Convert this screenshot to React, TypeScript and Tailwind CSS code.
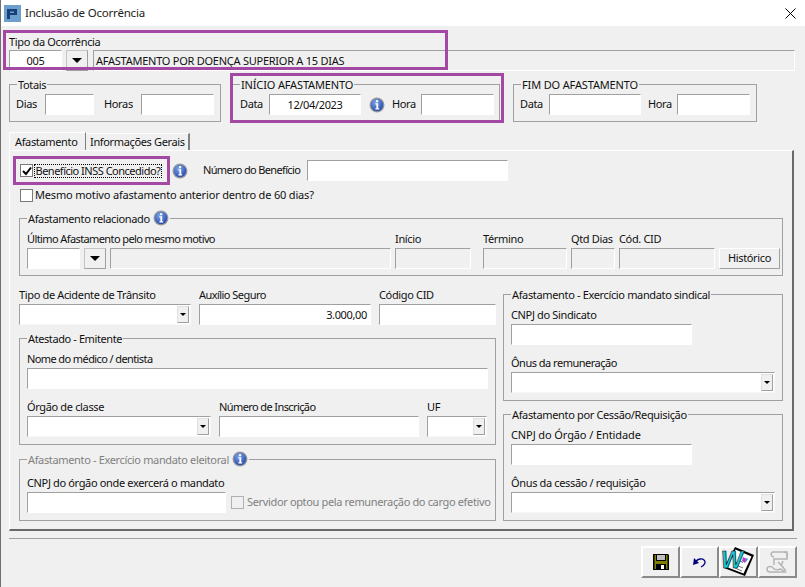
import type { ReactNode } from 'react';

// campo afundado estilo Win32
const Field = ({ className = '', value, disabled }: { className?: string; value?: string; disabled?: boolean }) => (
  <div
    className={`h-[21px] shrink-0 border border-t-[#a0a0a0] border-l-[#a0a0a0] border-r-white border-b-white flex items-center px-[2px] leading-none whitespace-nowrap ${disabled ? 'bg-[#f0f0f0]' : 'bg-white'} ${className}`}
  >
    {value}
  </div>
);

const DropButton = () => (
  <div className="w-[22px] h-[21px] shrink-0 border border-[#c4c4c4] border-r-[#a0a0a0] border-b-[#a0a0a0] bg-[#f0f0f0] flex items-center justify-center">
    <div className="w-0 h-0 border-x-[5px] border-x-transparent border-t-[5px] border-t-black" />
  </div>
);

const Select = ({ className = '' }: { className?: string }) => (
  <div className={`h-[21px] shrink-0 border border-t-[#a0a0a0] border-l-[#a0a0a0] border-r-[#f7f7f7] border-b-[#f7f7f7] bg-white flex justify-end p-[1px] ${className}`}>
    <div className="w-[12px] h-full border border-[#e0e0e0] border-r-[#a0a0a0] border-b-[#a0a0a0] bg-[#f0f0f0] flex items-center justify-center">
      <div className="w-0 h-0 border-x-[3px] border-x-transparent border-t-[3px] border-t-black" />
    </div>
  </div>
);

const InfoIcon = ({ id }: { id: string }) => (
  <svg width="16" height="16" viewBox="0 0 16 16" className="shrink-0">
    <defs>
      <radialGradient id={id} cx="0.4" cy="0.3" r="0.8">
        <stop offset="0" stopColor="#7fa6e8" />
        <stop offset="1" stopColor="#1b3fa8" />
      </radialGradient>
    </defs>
    <circle cx="8" cy="8" r="7.5" fill="#9a9a9a" />
    <circle cx="8" cy="8" r="6.2" fill={`url(#${id})`} />
    <rect x="7" y="3.2" width="2.2" height="2" fill="#fff" />
    <path d="M6.4 6.3h2.8v5h1v1.2H6.4v-1.2h1v-3.8h-1z" fill="#fff" />
  </svg>
);

const Group = ({ legend, className = '', children, gray }: { legend: ReactNode; className?: string; children: ReactNode; gray?: boolean }) => (
  <fieldset className={`border border-[#a0a0a0] shrink-0 min-w-0 px-[7px] pb-[6px] ${className}`}>
    <legend className={`px-[1px] h-[14px] flex items-center gap-[3px] leading-none whitespace-nowrap ${gray ? 'text-[#808080]' : ''}`}>{legend}</legend>
    {children}
  </fieldset>
);

const Label = ({ children, className = '' }: { children: ReactNode; className?: string }) => (
  <div className={`h-[14px] mb-[2px] leading-[14px] whitespace-nowrap ${className}`}>{children}</div>
);

const Check = ({ checked, disabled }: { checked?: boolean; disabled?: boolean }) => (
  <div className={`w-[13px] h-[13px] shrink-0 border flex items-center justify-center ${disabled ? 'border-[#b0b0b0] bg-[#f0f0f0]' : 'border-[#7a7a7a] bg-white'}`}>
    {checked && (
      <svg width="10" height="10" viewBox="0 0 10 10">
        <path d="M1 5l3 3 5-6.5" fill="none" stroke="#000" strokeWidth="2" />
      </svg>
    )}
  </div>
);

const ToolButton = ({ children }: { children: ReactNode }) => (
  <div className="w-[39px] h-[32px] border-2 border-t-white border-l-white border-r-[#8a8a8a] border-b-[#8a8a8a] bg-[#f0f0f0] flex items-center justify-center">
    {children}
  </div>
);

const TimeRow = ({ data, className = '' }: { data?: string; className?: string }) => (
  <div className={`flex items-center mt-[3px] whitespace-nowrap ${className}`}>
    <span className="w-[29px] shrink-0">Data</span>
    <Field className="w-[92px] justify-center" value={data} />
    {data ? (
      <div className="w-[60px] shrink-0 pl-[8px] flex items-center gap-[7px]">
        <InfoIcon id="info-inicio" />
        <span>Hora</span>
      </div>
    ) : (
      <span className="w-[36px] shrink-0 pl-[7px]">Hora</span>
    )}
    <Field className="w-[73px]" />
  </div>
);

export default function App() {
  return (
    <div className="relative w-[805px] h-[587px] overflow-hidden bg-[#f0f0f0] border-l border-[#707070] font-['Noto_Sans',sans-serif] text-[11px] tracking-[-0.35px] text-[#101010]">
      {/* barra de título */}
      <div className="h-[26px] bg-white flex items-center pl-[3px] pr-[9px]">
        <svg width="17" height="17" viewBox="0 0 17 17" className="shrink-0">
          <rect width="17" height="17" fill="#6d9fcc" />
          <path d="M3 4h10v6H6v4H3V4zm3 2.500V8h4V6.500z" fill="#173f78" fillRule="evenodd" />
        </svg>
        <span className="ml-[4px] text-[11.5px] tracking-[-0.2px] text-[#222]">Inclusão de Ocorrência</span>
        <svg width="11" height="11" viewBox="0 0 11 11" className="ml-auto">
          <path d="M.5.500l10 10M10.500.500l-10 10" stroke="#000" strokeWidth="1" />
        </svg>
      </div>

      <div className="pl-[8px] pr-[10px]">
        {/* tipo da ocorrência */}
        <div className="pt-[9px]">
          <div className="h-[14px] mb-[1px] leading-[14px]">Tipo da Ocorrência</div>
          <div className="flex items-start">
            <Field className="w-[53px] justify-center" value="005" />
            <div className="ml-[4px]"><DropButton /></div>
            <Field className="w-[702px] ml-[5px] tracking-[-0.25px]" disabled value="AFASTAMENTO POR DOENÇA SUPERIOR A 15 DIAS" />
          </div>
        </div>

        {/* totais / início / fim */}
        <div className="flex mt-[6px]">
          <Group className="w-[212px] h-[45px]" legend="Totais">
            <div className="flex items-center mt-[3px] -ml-[1px]">
              <span className="w-[29px] shrink-0">Dias</span>
              <Field className="w-[49px]" />
              <span className="w-[47px] shrink-0 pl-[10px]">Horas</span>
              <Field className="w-[73px]" />
            </div>
          </Group>
          <Group className="w-[268px] h-[45px] ml-[11px]" legend={<span className="tracking-[-0.15px]">INÍCIO AFASTAMENTO</span>}>
            <TimeRow data="12/04/2023" />
          </Group>
          <Group className="w-[244px] h-[45px] ml-[13px]" legend={<span className="tracking-[-0.15px]">FIM DO AFASTAMENTO</span>}>
            <TimeRow className="-ml-[1px]" />
          </Group>
        </div>

        {/* abas */}
        <div className="flex items-end mt-[10px] h-[18px]">
          <div className="w-[77px] h-[18px] px-[5px] leading-[17px] bg-[#f0f0f0] border-t border-l border-white border-r border-r-[#808080]">Afastamento</div>
          <div className="w-[104px] h-[17px] pl-[4px] leading-[16px] border-t border-white border-r-2 border-r-[#808080] whitespace-nowrap">Informações Gerais</div>
        </div>

        <div className="w-[785px] h-[381px] border border-t-white border-l-white border-r-2 border-r-[#696969] border-b-2 border-b-[#696969] pl-[9px] pt-[9px]">
          <div className="flex items-center h-[21px]">
            <div className="w-[153px] pl-[1px] flex items-center gap-[1px]">
              <Check checked />
              <span className="border border-dotted border-black leading-[12px] px-[0.5px] whitespace-nowrap tracking-[-0.5px]">Benefício INSS Concedido?</span>
            </div>
            <InfoIcon id="info-beneficio" />
            <span className="ml-[15px] w-[104px] whitespace-nowrap tracking-[-0.65px]">Número do Benefício</span>
            <Field className="w-[201px]" />
          </div>
          <div className="flex items-center gap-[2px] h-[13px] mt-[8px] pl-[1px]">
            <Check />
            <span className="tracking-[-0.17px]">Mesmo motivo afastamento anterior dentro de 60 dias?</span>
          </div>

          {/* afastamento relacionado */}
          <Group
            className="w-[764px] h-[65px] mt-[9px]"
            legend={<>Afastamento relacionado <InfoIcon id="info-relacionado" /></>}
          >
            <div className="flex gap-[4px] pt-[7px] -mr-[9px]">
              <div className="w-[364px] shrink-0">
                <Label className="tracking-[-0.6px]">Último Afastamento pelo mesmo motivo</Label>
                <div className="flex gap-[4px]">
                  <Field className="w-[53px]" />
                  <DropButton />
                  <Field className="w-[281px]" disabled />
                </div>
              </div>
              <div className="w-[76px] shrink-0">
                <Label>Início</Label>
                <Field className="w-full" disabled />
              </div>
              <div className="w-[84px] shrink-0 ml-[8px]">
                <Label>Término</Label>
                <Field className="w-full" disabled />
              </div>
              <div className="w-[44px] shrink-0">
                <Label>Qtd Dias</Label>
                <Field className="w-full" disabled />
              </div>
              <div className="w-[96px] shrink-0">
                <Label>Cód. CID</Label>
                <Field className="w-full" disabled />
              </div>
              <div className="pt-[16px] shrink-0">
                <div className="w-[61px] h-[21px] border border-t-white border-l-white border-r-[#a0a0a0] border-b-[#a0a0a0] bg-[#f0f0f0] flex items-center justify-center">
                  Histórico
                </div>
              </div>
            </div>
          </Group>

          <div className="flex gap-[7px] mt-[11px]">
            {/* coluna esquerda */}
            <div className="w-[477px]">
              <div className="flex gap-[8px] pt-[1px]">
                <div>
                  <Label>Tipo de Acidente de Trânsito</Label>
                  <Select className="w-[172px]" />
                </div>
                <div>
                  <Label className="tracking-[-0.55px]">Auxílio Seguro</Label>
                  <Field className="w-[172px] justify-end pr-[3px]" value="3.000,00" />
                </div>
                <div>
                  <Label>Código CID</Label>
                  <Field className="w-[117px]" />
                </div>
              </div>

              <Group className="w-[477px] h-[114px] mt-[6px]" legend={<span className="tracking-[-0.4px]">Atestado - Emitente</span>}>
                <div className="pt-[7px]">
                  <Label className="tracking-[-0.6px]">Nome do médico / dentista</Label>
                  <Field className="w-[461px]" />
                  <div className="flex gap-[8px] mt-[11px]">
                    <div>
                      <Label>Órgão de classe</Label>
                      <Select className="w-[184px]" />
                    </div>
                    <div>
                      <Label className="tracking-[-0.6px]">Número de Inscrição</Label>
                      <Field className="w-[200px]" />
                    </div>
                    <div>
                      <Label>UF</Label>
                      <Select className="w-[60px]" />
                    </div>
                  </div>
                </div>
              </Group>

              <Group
                gray
                className="w-[477px] h-[69px] mt-[7px]"
                legend={<>Afastamento - Exercício mandato eleitoral <InfoIcon id="info-eleitoral" /></>}
              >
                <div className="pt-[10px]">
                  <Label>CNPJ do órgão onde exercerá o mandato</Label>
                  <div className="flex items-center">
                    <Field className="w-[199px]" />
                    <div className="ml-[5px] flex items-center gap-[3px] text-[#808080] whitespace-nowrap">
                      <Check disabled />
                      <span>Servidor optou pela remuneração do cargo efetivo</span>
                    </div>
                  </div>
                </div>
              </Group>
            </div>

            {/* coluna direita */}
            <div className="w-[280px]">
              <Group className="w-[280px] h-[114px]" legend="Afastamento - Exercício mandato sindical">
                <div className="pt-[7px]">
                  <Label>CNPJ do Sindicato</Label>
                  <Field className="w-[181px]" />
                  <Label className="mt-[11px] tracking-[-0.5px]">Ônus da remuneração</Label>
                  <Select className="w-[264px]" />
                </div>
              </Group>
              <Group className="w-[280px] h-[114px] mt-[6px]" legend="Afastamento por Cessão/Requisição">
                <div className="pt-[7px]">
                  <Label className="tracking-[-0.1px]">CNPJ do Órgão / Entidade</Label>
                  <Field className="w-[181px]" />
                  <Label className="mt-[11px]">Ônus da cessão / requisição</Label>
                  <Select className="w-[264px]" />
                </div>
              </Group>
            </div>
          </div>
        </div>

        <div className="h-[1px] bg-[#a0a0a0] mt-[7px] -mr-[2px]" />

        {/* barra de botões */}
        <div className="flex justify-end mt-[7px] -mr-[2px]">
          <ToolButton>
            <svg width="16" height="16" viewBox="0 0 16 16">
              <path d="M0 0h15l1 1v15H0z" fill="#000" />
              <path d="M1.500 1h13v14h-13z" fill="#808000" />
              <path d="M3 1h10v6H3z" fill="#000" />
              <path d="M4 1h8v5H4z" fill="#c0c0c0" />
              <path d="M3 10h10v6H3z" fill="#000" />
              <path d="M8 11h3v4H8z" fill="#fff" />
            </svg>
          </ToolButton>
          <ToolButton>
            <svg width="13" height="11" viewBox="0 0 13 11">
              <path d="M3 4C5 2 9 1 11 3c2 2 1 5-3 7" fill="none" stroke="#000080" strokeWidth="1.300" />
              <path d="M0 8l1-7 5 5z" fill="#000080" />
            </svg>
          </ToolButton>
          <ToolButton>
            <svg width="33" height="30" viewBox="0 0 33 30" className="overflow-visible">
              <path d="M13 0l19 8-9 21L2 21z" fill="#000" />
              <path d="M13.500 2.500l16 7-8 17L4.500 20z" fill="#fff" />
              <path d="M14 18l7 3M13 21l7 3M18 14l3 1.500" stroke="#707070" strokeWidth="1" />
              <path d="M21 10l4 2-2 4-3-2z" fill="#c83cc0" />
              <path d="M23 14l2-3 1 1-2 3z" fill="#2aa0d8" />
              <text x="-1" y="21" fontFamily="'Liberation Sans',sans-serif" fontStyle="italic" fontWeight="700" fontSize="23" letterSpacing="-1" fill="#19c8d8" stroke="#000" strokeWidth="0.6">W</text>
            </svg>
          </ToolButton>
          <ToolButton>
            <svg width="28" height="26" viewBox="0 0 28 26" fill="none" stroke="#b4b4b4" strokeWidth="1.500">
              <path d="M8 3h15v7H10v6" />
              <path d="M20 3c3 0 4 2 3 5" />
              <path d="M8 3c-2 3 0 5 2 5" />
              <path d="M3 20c0-3 5-3 6-1s5 2 8 1l4 3H6c-2 0-3-1-3-3z" />
              <path d="M14 13l4 4 4 5M19 12l-2 5" />
            </svg>
          </ToolButton>
        </div>
      </div>

      {/* destaques roxos sobre a tela */}
      <div className="absolute left-[2px] top-[30px] w-[445px] h-[40px] border-[3px] border-[#a349a4]" />
      <div className="absolute left-[229px] top-[73px] w-[274px] h-[50px] border-[3px] border-[#a349a4]" />
      <div className="absolute left-[12px] top-[156px] w-[157px] h-[29px] border-[3px] border-[#a349a4]" />
    </div>
  );
}
